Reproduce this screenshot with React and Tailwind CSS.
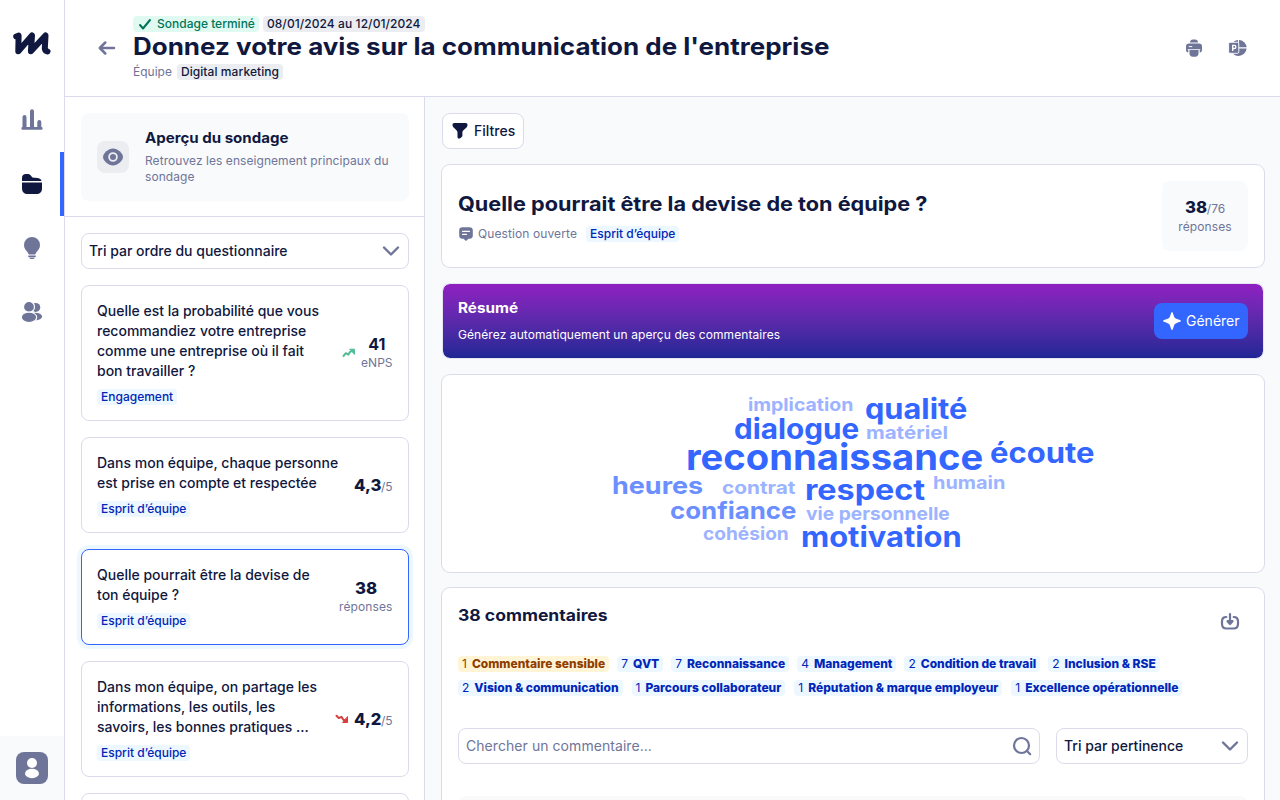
import { useLayoutEffect, useRef } from "react";

/* Wide display lettering: stretches its text horizontally to fill the given width. */
function Wide({ w, className = "", children }) {
  const ref = useRef(null);
  useLayoutEffect(() => {
    const el = ref.current;
    el.style.transform = `scaleX(${w / el.offsetWidth})`;
  }, [w, children]);
  return (
    <span className={`block ${className}`} style={{ width: w }}>
      <span ref={ref} className="inline-block origin-left whitespace-nowrap align-top">
        {children}
      </span>
    </span>
  );
}

const Chart = () => (
  <svg width="24" height="24" viewBox="0 0 24 24" fill="currentColor">
    <path d="M2.500 19.500V8.900a2 2 0 0 1 4 0v10.600zM10 19.500V3.300a2 2 0 0 1 4 0v16.200zM17.300 19.500V14a2 2 0 0 1 4 0v5.500z" />
    <rect x="1.400" y="19" width="21.200" height="2.800" rx="1.200" />
  </svg>
);
const Folder = () => (
  <svg width="24" height="24" viewBox="0 0 24 24" fill="currentColor">
    <path d="M2 8.900V6C2 3.400 3.400 2 6 2h1.600c1.500 0 2.600.5 3.400 1.700l.8 1.100c.5.700 1 .9 1.900.9H15c3.600 0 6 .8 6.600 3.200z" />
    <path d="M2 10.600h20V16c0 4-2 6-6 6H8c-4 0-6-2-6-6z" />
  </svg>
);
const Bulb = () => (
  <svg width="24" height="24" viewBox="0 0 24 24" fill="currentColor">
    <path d="M12 1a8 8 0 0 0-8 8c0 3.200 1.700 5.200 3.400 6.900.7.700.8 1.300.9 1.900.1.500.5.800 1 .8h5.400c.5 0 .9-.3 1-.8.1-.6.200-1.200.9-1.900C18.300 14.200 20 12.200 20 9a8 8 0 0 0-8-8z" />
    <rect x="8" y="19.500" width="8" height="1.400" rx=".7" />
    <path d="M9 21.600h6c-.6 1.100-1.600 1.500-3 1.500s-2.400-.4-3-1.500z" />
  </svg>
);
const People = () => (
  <svg width="24" height="24" viewBox="0 0 24 24" fill="currentColor">
    <circle cx="15.800" cy="7.400" r="4.500" />
    <ellipse cx="15" cy="16.600" rx="7.100" ry="3.900" />
    <circle cx="9" cy="6.900" r="5.500" stroke="#fff" strokeWidth="1.200" />
    <ellipse cx="9" cy="17.300" rx="7.700" ry="5.200" stroke="#fff" strokeWidth="1.200" />
  </svg>
);
const Chevron = () => (
  <svg width="18" height="12" viewBox="0 0 18 12" fill="none" stroke="#6f7599" strokeWidth="2.400" strokeLinecap="round" strokeLinejoin="round">
    <path d="M2 2.500l7 7 7-7" />
  </svg>
);
const Trend = ({ down }) => (
  <svg width="14" height="10" viewBox="0 0 14 10" fill="none" stroke={down ? "#d63d3d" : "#52bd94"} strokeWidth="2" strokeLinejoin="round" strokeLinecap="round">
    {down ? (
      <>
        <path d="M1.500 1.800l2.300 2.300 2.600-1.300 2 3 2.600 1" />
        <path d="M12.500 3v5.500H8z" fill="#d63d3d" strokeWidth="1" />
      </>
    ) : (
      <>
        <path d="M1.500 8l2.300-2.800 2.500 1.400 2-3 2.700-1" />
        <path d="M12.500 6V1.200H8z" fill="#52bd94" strokeWidth="1" />
      </>
    )}
  </svg>
);

const Tag = ({ children, className = "bg-[#edf7ff] text-[#0026b8]" }) => (
  <span className={`inline-flex h-4 items-center rounded px-1 text-xs leading-4 whitespace-nowrap ${className}`}>{children}</span>
);

const Select = ({ children }) => (
  <div className="flex h-9 items-center justify-between rounded-lg border border-[#dbdbec] bg-white pr-2 pl-[7px] text-sm">
    <span className="font-[450]">{children}</span>
    <Chevron />
  </div>
);

function QCard({ lines, tag, active, children }) {
  return (
    <div className={`flex shrink-0 items-center justify-between rounded-lg border bg-white p-[15px] ${active ? "border-[#3366ff] ring-4 ring-[#edf7ff]" : "border-[#dbdbec]"}`}>
      <div className="text-sm leading-5 font-[450] whitespace-nowrap">
        {lines.map((l) => (
          <div key={l}>{l}</div>
        ))}
        <div className="mt-2 flex">
          <Tag>{tag}</Tag>
        </div>
      </div>
      <div className="pr-[0.5px]">{children}</div>
    </div>
  );
}

const words = [
  ["implication", 748, 105, 411, 18, "#9cb3ff"],
  ["qualité", 865, 102, 418, 28, "#3366ff"],
  ["dialogue", 734, 125, 438, 28, "#3366ff"],
  ["matériel", 866, 82, 439, 18, "#9cb3ff"],
  ["reconnaissance", 686, 297, 469, 36, "#3366ff"],
  ["écoute", 990, 104, 462, 28, "#3366ff"],
  ["heures", 612, 91, 494, 24, "#6b8fff"],
  ["contrat", 722, 74, 494, 18, "#9cb3ff"],
  ["respect", 805, 120, 499, 28, "#3366ff"],
  ["humain", 933, 72, 489, 18, "#9cb3ff"],
  ["confiance", 670, 126, 519, 24, "#6b8fff"],
  ["vie personnelle", 806, 144, 520, 18, "#9cb3ff"],
  ["cohésion", 703, 86, 540, 18, "#9cb3ff"],
  ["motivation", 801, 161, 546, 28, "#3366ff"],
];

const topics = [
  [
    [1, "Commentaire sensible"], [7, "QVT"], [7, "Reconnaissance"], [4, "Management"], [2, "Condition de travail"], [2, "Inclusion & RSE"],
  ],
  [
    [2, "Vision & communication"], [1, "Parcours collaborateur"], [1, "Réputation & marque employeur"], [1, "Excellence opérationnelle"],
  ],
];

export default function App() {
  return (
    <div className="flex h-[800px] w-[1280px] overflow-hidden bg-white font-['Inter',sans-serif] text-[#101840]">
      <aside className="flex w-[65px] shrink-0 flex-col border-r border-[#dbdbec] text-[#6f7599]">
        <div className="flex h-[88px] items-center justify-center text-[#101840]">
          <svg width="40" height="28" viewBox="0 0 40 28" fill="none" stroke="currentColor" strokeWidth="6" strokeLinejoin="round" strokeLinecap="round">
            <path d="M4.200 6.500L6.600 5.700 6.300 21.200 20 5.500 18.900 21.200 33.500 5.500 32.800 18.500Q32.900 20.500 35.500 21.500" />
          </svg>
        </div>
        <div className="flex h-16 items-center justify-center"><Chart /></div>
        <div className="flex h-16 items-center justify-end border-r-4 border-[#3366ff] pr-4 text-[#101840]"><Folder /></div>
        <div className="flex h-16 items-center justify-center"><Bulb /></div>
        <div className="flex h-16 items-center justify-center"><People /></div>
        <div className="mt-auto flex h-16 items-center justify-center bg-[#f8fafc]">
          <svg width="32" height="32" viewBox="0 0 32 32">
            <rect width="32" height="32" rx="8" fill="#6f7599" />
            <circle cx="16" cy="11" r="5" fill="#fff" />
            <ellipse cx="16" cy="21.500" rx="7" ry="4.700" fill="#fff" />
          </svg>
        </div>
      </aside>

      <div className="flex min-w-0 flex-1 flex-col">
        <header className="flex h-[97px] shrink-0 items-center border-b border-[#dbdbec] pl-8 pr-8">
          <svg className="mr-4 shrink-0" width="20" height="20" viewBox="0 0 20 20" fill="none" stroke="#6f7599" strokeWidth="2.500" strokeLinecap="round" strokeLinejoin="round">
            <path d="M17 10H3.500M8.300 4.500L2.800 10l5.500 5.500" />
          </svg>
          <div className="flex-1">
            <div className="flex h-4 gap-1">
              <Tag className="gap-[5px] bg-[#e1faf1] pl-[5px] font-[450] text-[#00755a]">
                <svg width="14" height="14" viewBox="0 0 14 14" fill="none" stroke="currentColor" strokeWidth="2" strokeLinecap="round" strokeLinejoin="round"><path d="M2 8l3 3.500L12 3" /></svg>
                Sondage terminé
              </Tag>
              <Tag className="bg-[#ebedf0] font-[450] tracking-[0.08px]">08/01/2024 au 12/01/2024</Tag>
            </div>
            <Wide w={696} className="h-8 text-2xl leading-[30px] font-bold">Donnez votre avis sur la communication de l'entreprise</Wide>
            <div className="flex h-4 gap-[5px] text-xs leading-4 text-[#6f7599]">
              Équipe <Tag className="bg-[#ebedf0] font-[450] tracking-[0.08px] text-[#101840]">Digital marketing</Tag>
            </div>
          </div>
          <div className="flex gap-6 text-[#6f7599]">
            <svg width="20" height="20" viewBox="0 0 20 20" fill="currentColor">
              <path d="M6 4.400C6 2.500 7.200 1.500 9 1.500h2c1.800 0 3 1 3 2.900z" />
              <path d="M5 5.400h10c2 0 3 1 3 3v3.300c0 1.700-.8 2.700-2.300 2.900v-2.500h.6v-.9H3.700v.9h.6v2.500C2.800 14.400 2 13.400 2 11.700V8.400c0-2 1-3 3-3z" />
              <path d="M5.500 12.100h9v3.400c0 2-1.200 3.200-3.200 3.200H8.700c-2 0-3.200-1.200-3.200-3.200z" />
              <path d="M4.800 8.600h3.400" stroke="#fff" strokeWidth="1" />
            </svg>
            <svg width="20" height="20" viewBox="0 0 20 20" fill="currentColor">
              <path d="M11 2v7.300h7.600A8 8 0 0 0 11 2z" />
              <path d="M18.600 10.500H10V2a8 8 0 1 0 8.600 8.500z" />
              <rect x=".6" y="4.300" width="10.200" height="11" rx="1.500" stroke="#fff" strokeWidth=".9" />
              <path d="M4.700 13V7.300h1.600a1.600 1.600 0 0 1 0 3.200H4.700" fill="none" stroke="#fff" strokeWidth="1.300" />
            </svg>
          </div>
        </header>

        <div className="flex min-h-0 flex-1">
          <section className="flex w-[360px] shrink-0 flex-col overflow-hidden border-r border-[#dbdbec]">
            <div className="h-[120px] shrink-0 border-b border-[#dbdbec] pt-4 pr-[15px] pl-4">
              <div className="flex h-[88px] items-center rounded-lg bg-[#f8fafc] px-4">
                <div className="mr-4 flex size-8 shrink-0 items-center justify-center rounded-lg bg-[#ebedf0]">
                  <svg width="20" height="18" viewBox="0 0 20 18" fill="none">
                    <path d="M10 .5c4.500 0 10 4.800 10 8.500s-5.500 8.500-10 8.500S0 12.700 0 9 5.500.5 10 .5z" fill="#6f7599" />
                    <circle cx="10" cy="9" r="3.900" stroke="#ebedf0" strokeWidth="1.800" />
                  </svg>
                </div>
                <div>
                  <Wide w={143} className="h-6 text-sm leading-[18px] font-bold">Aperçu du sondage</Wide>
                  <div className="text-xs leading-4 tracking-[0.06px] whitespace-nowrap text-[#6f7599]">Retrouvez les enseignement principaux du<br />sondage</div>
                </div>
              </div>
            </div>
            <div className="flex flex-col gap-4 pt-4 pr-[15px] pl-4">
              <Select>Tri par ordre du questionnaire</Select>
              <QCard lines={["Quelle est la probabilité que vous", "recommandiez votre entreprise", "comme une entreprise où il fait", "bon travailler ?"]} tag="Engagement">
                <div className="flex items-center gap-[5px]">
                  <Trend />
                  <div className="flex flex-col items-center pt-px">
                    <Wide w={17} className="text-base leading-[19px] font-bold">41</Wide>
                    <span className="text-xs leading-[18px] text-[#6f7599]">eNPS</span>
                  </div>
                </div>
              </QCard>
              <QCard lines={["Dans mon équipe, chaque personne", "est prise en compte et respectée"]} tag="Esprit d’équipe">
                <div className="flex items-baseline text-xs text-[#6f7599]">
                  <Wide w={27} className="text-base font-extrabold text-[#101840]">4,3</Wide>/5
                </div>
              </QCard>
              <QCard active lines={["Quelle pourrait être la devise de", "ton équipe ?"]} tag="Esprit d’équipe">
                <div className="flex flex-col items-center">
                  <Wide w={22} className="text-base leading-5 font-extrabold">38</Wide>
                  <span className="text-xs leading-[18px] tracking-[0.1px] text-[#6f7599]">réponses</span>
                </div>
              </QCard>
              <QCard lines={["Dans mon équipe, on partage les", "informations, les outils, les", "savoirs, les bonnes pratiques ..."]} tag="Esprit d’équipe">
                <div className="flex items-center gap-[5px] pb-px">
                  <Trend down />
                  <div className="flex items-baseline text-xs text-[#6f7599]">
                    <Wide w={27} className="text-base leading-[22px] font-extrabold text-[#101840]">4,2</Wide>/5
                  </div>
                </div>
              </QCard>
              <div className="h-24 shrink-0 rounded-lg border border-[#dbdbec] bg-white" />
            </div>
          </section>

          <main className="flex min-w-0 flex-1 flex-col gap-4 overflow-hidden bg-[#f8fafc] py-4 pr-4 pl-[17px]">
            <button className="flex h-9 w-[82px] shrink-0 items-center gap-[6px] rounded-lg border border-[#dbdbec] bg-white pl-[9px] text-sm font-[450]">
              <svg width="16" height="18" viewBox="0 0 16 18" fill="currentColor"><path d="M2.500 1h11C14.800 1 15.500 1.700 15.500 2.900c0 1-.3 1.800-1 2.500l-3.300 3c-.5.500-.8 1-.8 1.800v3.200c0 .7-.3 1.200-.8 1.600l-1.300 1.200c-1.200.9-2.800.2-2.800-1.300v-4.500c0-.8-.3-1.500-.8-2L1.400 5.300C.8 4.700.5 3.900.5 2.900.5 1.700 1.200 1 2.500 1z" /></svg>
              Filtres
            </button>

            <div className="flex h-[102px] shrink-0 items-center justify-between rounded-lg bg-white p-4 ring-1 ring-[#dbdbec]">
              <div>
                <Wide w={469} className="h-8 text-xl leading-[26px] font-bold">Quelle pourrait être la devise de ton équipe ?</Wide>
                <div className="mt-[3px] flex h-4 items-center text-xs leading-4 text-[#6f7599]">
                  <svg className="mr-1" width="16" height="16" viewBox="0 0 16 16" fill="currentColor">
                    <path d="M4.500 1.200h7c2.200 0 3.300 1.100 3.300 3.300v5c0 2.200-1.100 3.300-3.300 3.300h-1L8 15l-2.500-2.200h-1c-2.200 0-3.300-1.100-3.300-3.300v-5c0-2.200 1.100-3.300 3.300-3.300z" />
                    <path d="M4.500 5.300h7M4.500 8.300h4" stroke="#fff" strokeWidth="1.200" strokeLinecap="round" />
                  </svg>
                  <span className="mr-[9px] tracking-[0.1px]">Question ouverte</span>
                  <Tag className="bg-[#edf7ff] font-[450] text-[#0026b8]">Esprit d’équipe</Tag>
                </div>
              </div>
              <div className="flex h-[70px] w-[86px] flex-col items-center justify-center rounded-lg bg-[#f8fafc] pt-px text-xs leading-4 text-[#6f7599]">
                <div className="flex h-[21px] items-baseline">
                  <Wide w={22} className="text-base leading-[18px] font-extrabold text-[#101840]">38</Wide>/76
                </div>
                <span className="tracking-[0.1px]">réponses</span>
              </div>
            </div>

            <div className="flex h-[76px] shrink-0 items-center justify-between rounded-lg border border-[#dbdbec]/70 bg-linear-to-b from-[#8f1fc1] to-[#202695] bg-clip-padding px-[15px] text-white">
              <div>
                <Wide w={60} className="h-7 text-sm leading-[18px] font-bold">Résumé</Wide>
                <div className="text-xs leading-4 tracking-[0.08px]">Générez automatiquement un aperçu des commentaires</div>
              </div>
              <button className="flex h-9 w-[94px] items-center gap-1 rounded-lg bg-[#3366ff] pl-2 text-sm">
                <svg width="20" height="20" viewBox="0 0 20 20" fill="#fff"><path d="M10 1c.7 0 1.100 1.800 1.900 4.100.6 1.800 1.300 2.400 3 3C17.300 9 19 9.300 19 10s-1.700 1-4.100 1.900c-1.700.6-2.400 1.200-3 3C11.100 17.200 10.700 19 10 19s-1.100-1.800-1.900-4.100c-.6-1.800-1.300-2.400-3-3C2.700 11 1 10.700 1 10s1.700-1 4.100-1.900c1.700-.6 2.400-1.200 3-3C8.900 2.800 9.300 1 10 1z" /></svg>
                Générer
              </button>
            </div>

            <div className="relative h-[197px] shrink-0 rounded-lg bg-white ring-1 ring-[#dbdbec]">
              {words.map(([t, x, w, base, size, color]) => (
                <div key={t} className="absolute leading-none font-bold" style={{ left: x - 442, top: Math.round(base - 374 - size * 0.8635), fontSize: size, color }}>
                  <Wide w={w}>{t}</Wide>
                </div>
              ))}
            </div>

            <div className="flex h-[300px] shrink-0 flex-col rounded-lg bg-white px-4 ring-1 ring-[#dbdbec]">
              <div className="flex h-[68px] shrink-0 items-center justify-between">
                <Wide w={150} className="mb-[15px] text-base leading-6 font-bold">38 commentaires</Wide>
                <svg className="mr-2" width="20" height="20" viewBox="0 0 20 20" fill="none" stroke="#6f7599" strokeWidth="2.200" strokeLinecap="round" strokeLinejoin="round">
                  <path d="M6.300 5C3.500 5 2 6.500 2 9.300V12c0 3 1.500 4.500 4.500 4.500h7c3 0 4.500-1.500 4.500-4.500V9.300C18 6.500 16.500 5 13.700 5" />
                  <path d="M10 2v8" />
                  <path d="M7.500 9.200h5L10 12z" fill="#6f7599" />
                </svg>
              </div>
              <div className="flex h-[72px] shrink-0 flex-col gap-2">
                {topics.map((row, i) => (
                  <div key={i} className={i ? "flex h-4 gap-[9px]" : "flex h-4 gap-2"}>
                    {row.map(([n, t]) => (
                      <Tag key={t} className={t === "Commentaire sensible" ? "gap-[5px] bg-[#fff5d6] text-[#8f3e00]" : "gap-[5px] bg-[#edf7ff] text-[#0026b8]"}>
                        {n} <b className="font-extrabold">{t}</b>
                      </Tag>
                    ))}
                  </div>
                ))}
              </div>
              <div className="grid shrink-0 grid-cols-[582px_192px] gap-4">
                <div className="flex h-9 items-center justify-between rounded-lg border border-[#dbdbec] pr-[7px] pl-[7px] text-sm text-[#6f7599]">
                  <span className="tracking-[0.06px]">Chercher un commentaire...</span>
                  <svg width="20" height="20" viewBox="0 0 20 20" fill="none" stroke="currentColor" strokeWidth="2.200" strokeLinecap="round"><circle cx="9.500" cy="9.500" r="7.500" /><path d="M15 15l3.200 3.200" /></svg>
                </div>
                <Select>Tri par pertinence</Select>
              </div>
              <div className="mt-8 h-24 shrink-0 rounded-lg bg-[#fafafa]" />
            </div>
          </main>
        </div>
      </div>
    </div>
  );
}
